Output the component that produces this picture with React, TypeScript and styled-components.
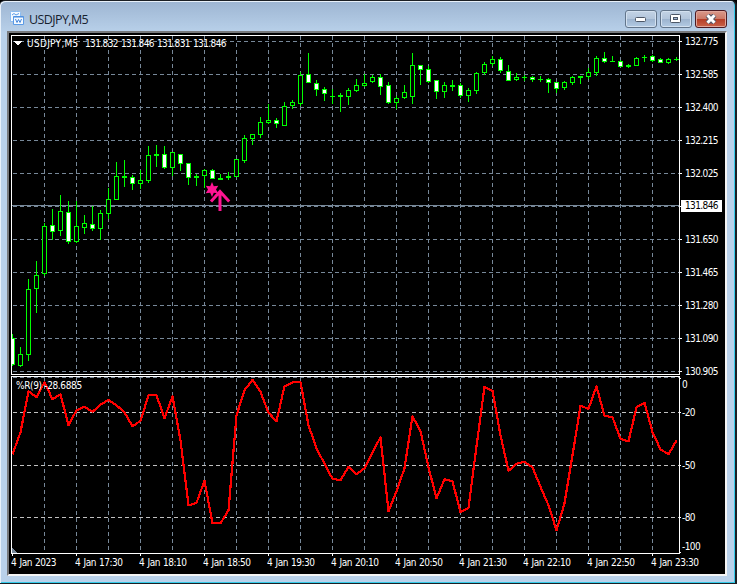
import React from "react";
import styled, { createGlobalStyle } from "styled-components";

const GlobalStyle = createGlobalStyle`
  * { box-sizing: border-box; }
  body { margin: 0; background: #000; overflow: hidden; }
`;

const Window = styled.div`
  width: 737px;
  height: 584px;
  display: flex;
  flex-direction: column;
  background: linear-gradient(#9db5d2, #b9d1ea 32px);
  border: solid #1b1f24;
  border-width: 1px 2px 1px 0;
  border-radius: 5px 6px 0 0;
  box-shadow: inset 1px 1px 0 #e8f1fa, inset -1px -1px 0 #35cbea;
  padding: 0 7px 7px 7px;
`;

const TitleBar = styled.header`
  height: 30px;
  flex: none;
  display: flex;
  align-items: center;
  padding: 5px 1px 0 3px;
`;

const Title = styled.h1`
  margin: 2px auto 0 5px;
  font: 400 12.5px/16px "Open Sans", "Noto Sans", sans-serif;
  letter-spacing: -0.6px;
  color: #16222f;
`;

const Controls = styled.div`
  display: flex;
  gap: 3px;
`;

const ControlButton = styled.button<{ $danger?: boolean }>`
  width: 32px;
  height: 18px;
  padding: 0;
  display: grid;
  place-items: center;
  border: 1px solid ${(p) => (p.$danger ? "#4c1a22" : "#62758b")};
  border-radius: 3px;
  box-shadow: inset 0 0 0 1px ${(p) => (p.$danger ? "#e0a69b" : "#d3e1f0")};
  background: ${(p) =>
    p.$danger
      ? "linear-gradient(#d9998b 0, #cc7967 48%, #b43c26 50%, #c9634a 100%)"
      : "linear-gradient(#c3d3e5 0, #b3c6dc 48%, #9cb3ce 50%, #b3cbe4 100%)"};
`;

const Client = styled.main`
  width: 720px;
  height: 545px;
  display: flex;
  border: solid;
  border-width: 2px;
  border-color: #77797c #f4f4f4 #f4f4f4 #77797c;
  background: #000;
`;

const Plot = styled.section`
  position: relative;
  width: 674px;
  flex: none;
  font: 10px/12px "DejaVu Sans Condensed", "DejaVu Sans", sans-serif;
  color: #fff;
`;

const Drawing = styled.svg`
  display: block;
`;

const Quote = styled.div`
  position: absolute;
  left: 18px;
  top: 5px;
  display: flex;
  white-space: nowrap;
  letter-spacing: -0.6px;
`;

const Instrument = styled.span`
  width: 58px;
  letter-spacing: 0.3px;
`;

const QuoteValue = styled.span`
  width: 36px;
`;

const IndicatorName = styled.div`
  position: absolute;
  left: 7px;
  top: 347px;
  white-space: nowrap;
  letter-spacing: -0.36px;
`;

const TimeAxis = styled.div`
  display: flex;
  padding-left: 2px;
  margin-top: 1px;
  letter-spacing: -0.5px;
  word-spacing: 0.9px;
`;

const TimeLabel = styled.span`
  width: 64px;
  flex: none;
  white-space: nowrap;
`;

const Scale = styled.aside`
  flex: 1;
  padding-top: 3px;
  font: 10px/12px "DejaVu Sans Condensed", "DejaVu Sans", sans-serif;
  letter-spacing: -0.6px;
  color: #fff;
`;

const PriceList = styled.div`
  display: flex;
  flex-direction: column;
  gap: 21px;
`;

const Price = styled.span<{ $current?: boolean }>`
  height: 12px;
  width: 41px;
  margin-left: -2px;
  padding-left: 4px;
  background: ${(p) => (p.$current ? "#fff" : "transparent")};
  color: ${(p) => (p.$current ? "#000" : "#fff")};
  position: relative;
  top: ${(p) => (p.$current ? "-1px" : "0")};
`;

const LevelList = styled.div`
  display: flex;
  flex-direction: column;
  padding-top: 1px;
`;

const Level = styled.span<{ $gap: number }>`
  margin: ${(p) => p.$gap}px 0 0 -1px;
`;

const prices = ["132.775", "132.585", "132.400", "132.215", "132.025", "131.846", "131.650", "131.465", "131.280", "131.090", "130.905"];
const levels: [string, number][] = [["0", 0], ["-20", 16], ["-50", 41], ["-80", 40], ["-100", 17]];
const quotes = ["131.832", "131.846", "131.831", "131.846"];
const times = ["4 Jan 2023", "4 Jan 17:30", "4 Jan 18:10", "4 Jan 18:50", "4 Jan 19:30", "4 Jan 20:10", "4 Jan 20:50", "4 Jan 21:30", "4 Jan 22:10", "4 Jan 22:50", "4 Jan 23:30"];

// high, body top, body bottom, low, 1 = bearish (filled)
const candles: number[][] = [
  [334,338,365,366,1],[347,354,366,367,0],[279,289,355,361,0],[261,275,289,313,0],[223,226,274,276,0],
  [209,225,232,240,1],[195,211,231,236,0],[201,212,242,244,1],[201,226,242,243,0],[215,223,228,234,0],
  [206,224,229,231,1],[210,213,229,240,0],[188,199,214,219,0],[162,176,200,200,0],[160,176,178,187,0],
  [175,177,184,190,1],[170,180,184,189,0],[146,155,181,183,0],[145,154,156,167,0],[146,154,168,169,1],
  [152,152,168,176,0],[154,154,164,171,1],[163,163,178,185,1],[174,176,178,186,0],[169,170,176,188,0],
  [169,170,179,179,1],[174,178,180,180,0],[172,176,178,180,0],[159,159,177,177,0],[135,138,161,163,0],
  [134,134,139,145,0],[117,122,135,138,0],[104,120,123,124,0],[118,120,124,128,1],[102,106,126,126,0],
  [100,102,106,109,0],[72,75,104,106,0],[53,74,83,83,1],[80,83,90,96,1],[87,89,94,101,1],
  [89,96,97,104,0],[93,95,97,112,0],[88,90,97,105,0],[79,85,91,92,0],[74,83,86,87,0],
  [75,77,82,83,0],[74,77,87,95,1],[82,85,103,104,1],[96,98,103,109,0],[85,92,98,99,0],
  [53,65,97,104,0],[65,65,70,85,1],[66,69,82,83,1],[80,80,92,99,1],[82,85,92,98,0],
  [80,85,87,91,0],[83,85,96,98,1],[88,90,96,102,0],[72,73,91,94,0],[62,64,73,75,0],
  [56,59,64,66,0],[57,59,71,73,1],[65,71,81,81,1],[73,77,80,81,0],[75,77,78,81,0],
  [76,77,80,82,1],[76,79,80,82,0],[78,79,83,93,1],[82,82,89,93,1],[81,82,88,90,0],
  [76,77,83,85,0],[76,76,78,84,0],[68,72,77,79,0],[56,58,73,76,0],[52,58,62,63,1],
  [56,61,62,62,0],[60,61,67,67,1],[64,65,67,68,0],[57,58,66,66,0],[55,57,58,62,0],
  [55,56,61,62,1],[58,59,63,63,1],[58,59,63,64,0],[57,59,60,61,0],
];

const williams = [
  454,432,391,397,382,399,394,425,410,406.5,411.5,404.5,399.5,405,412,426,420.5,395,395,418,396,440,505,502.5,
  480.5,523,523,510,415,390,379.5,391.5,412.5,421,386,382,382,425,448,463.5,478.5,480,466.5,474,468,452,437,511,
  491,468,416,431,467,498,479,481,512,507.5,446,386.5,390.5,435,470.5,463.5,461.5,467,486.5,505,530,503,455,405.5,
  408.5,386,415.5,417,438.5,441,407,402.5,432,449,454,440,
];

const columns = Array.from({ length: 20 }, (_, i) => 44.5 + i * 32);
const rows = Array.from({ length: 11 }, (_, i) => 41.5 + i * 33);

function Candle({ index }: { index: number }) {
  const [high, top, bottom, low, filled] = candles[index];
  const x = 12 + index * 8;
  const h = bottom - top;
  return (
    <g>
      <path d={`M${x + 0.5} ${high}V${low}`} stroke="#00ff00" />
      <rect x={x - 2} y={top} width="5" height={h} fill="#00ff00" />
      {h > 2 && <rect x={x - 1} y={top + 1} width="3" height={h - 2} fill={filled ? "#fff" : "#000"} />}
    </g>
  );
}

function ChartDrawing() {
  return (
    <Drawing width="674" height="523" viewBox="9 33 674 523" shapeRendering="crispEdges">
      <defs>
        <clipPath id="plot"><rect x="12" y="36" width="667" height="517" /></clipPath>
      </defs>
      <g stroke="#778899" strokeDasharray="4 3" fill="none">
        {columns.map((x) => <path key={x} d={`M${x} 36V374M${x} 378V553`} />)}
        {rows.map((y) => <path key={y} d={`M13 ${y}H679`} />)}
        <path d="M13 377.5H679" />
      </g>
      <path d="M13 412.5H679M13 465.5H679M13 517.5H679" stroke="#c0c0c0" strokeDasharray="4 3" />
      <path d="M12 205.5H679" stroke="#778899" />
      <g clipPath="url(#plot)">
        {candles.map((_, i) => <Candle key={i} index={i} />)}
        <polyline points={williams.map((y, i) => `${12.5 + i * 8},${y + 0.3}`).join(" ")} fill="none" stroke="#f00" strokeWidth="2.2" strokeLinejoin="round" />
        <path d="M12 548L17 553H12Z" fill="#778899" />
      </g>
      <g stroke="#fff" fill="none">
        <path d="M11.5 35.5H679.5V374.5H11.5ZM11.5 376.5H679.5V553.5H11.5Z" />
        <path d={rows.map((y) => `M680 ${y}H682`).join("")} />
        <path d="M680 378.5H681M680 412.5H681M680 465.5H681M680 517.5H681M680 552.5H681" />
        <path d={times.map((_, i) => `M${12.5 + i * 64} 554V556`).join("")} />
      </g>
      <path d="M14 41H22L18 45.5Z" fill="#fff" />
      <g fill="#ff1493" shapeRendering="geometricPrecision">
        <path d="M212 182L213.8 186.3L218.3 185.8L216 189.5L218.3 193.2L213.8 192.7L212 197L210.2 192.7L205.7 193.2L208 189.5L205.7 185.8L210.2 186.3Z" />
        <path d="M220 211V191M211 201.5L220 191.5L229.2 201.5" fill="none" stroke="#ff1493" strokeWidth="3" />
      </g>
    </Drawing>
  );
}

function ChartIcon() {
  return (
    <svg width="14" height="15" viewBox="0 0 14 15" fill="none">
      <path d="M.5 1.5Q.5.5 1.5.5H9.5Q10.5.5 10.5 1.5V10.5H.5Z" fill="#f5faff" stroke="#8dbcf0" />
      <path d="M2 4L4 2.5L6 4L9 2.5" stroke="#5b9be6" />
      <path d="M3.5 5.5H13.5V13.5H3.5Z" fill="#f5faff" stroke="#5b9be6" />
      <path d="M3.5 6H13.5" stroke="#4386dc" />
      <path d="M5.5 8L7 11.5L8.5 8.5L10 11.5L11.5 8" stroke="#4386dc" />
    </svg>
  );
}

export default function App() {
  return (
    <>
      <GlobalStyle />
      <Window>
        <TitleBar>
          <ChartIcon />
          <Title>USDJPY,M5</Title>
          <Controls>
            <ControlButton aria-label="Minimize">
              <svg width="12" height="6" viewBox="0 0 12 6"><rect x=".5" y="1.5" width="10" height="4" rx="1" fill="#fff" stroke="#4c5767" /></svg>
            </ControlButton>
            <ControlButton aria-label="Maximize">
              <svg width="12" height="10" viewBox="0 0 12 10"><rect x=".5" y=".5" width="10" height="8" rx="1" fill="#fff" stroke="#4c5767" /><rect x="3.5" y="3.5" width="4" height="2" fill="#9fb5d0" stroke="#4c5767" /></svg>
            </ControlButton>
            <ControlButton $danger aria-label="Close">
              <svg width="12" height="10" viewBox="0 0 12 10"><path d="M2.5 1L9.5 9M9.5 1L2.5 9" stroke="#535666" strokeWidth="5" /><path d="M2.5 1.2L9.5 8.8M9.5 1.2L2.5 8.8" stroke="#fff" strokeWidth="3" /></svg>
            </ControlButton>
          </Controls>
        </TitleBar>
        <Client>
          <Plot>
            <ChartDrawing />
            <Quote>
              <Instrument>USDJPY,M5</Instrument>
              {quotes.map((q, i) => <QuoteValue key={i}>{q}</QuoteValue>)}
            </Quote>
            <IndicatorName>%R(9) -28.6885</IndicatorName>
            <TimeAxis>{times.map((t) => <TimeLabel key={t}>{t}</TimeLabel>)}</TimeAxis>
          </Plot>
          <Scale>
            <PriceList>{prices.map((p, i) => <Price key={p} $current={i === 5}>{p}</Price>)}</PriceList>
            <LevelList>{levels.map(([v, gap]) => <Level key={v} $gap={gap}>{v}</Level>)}</LevelList>
          </Scale>
        </Client>
      </Window>
    </>
  );
}
